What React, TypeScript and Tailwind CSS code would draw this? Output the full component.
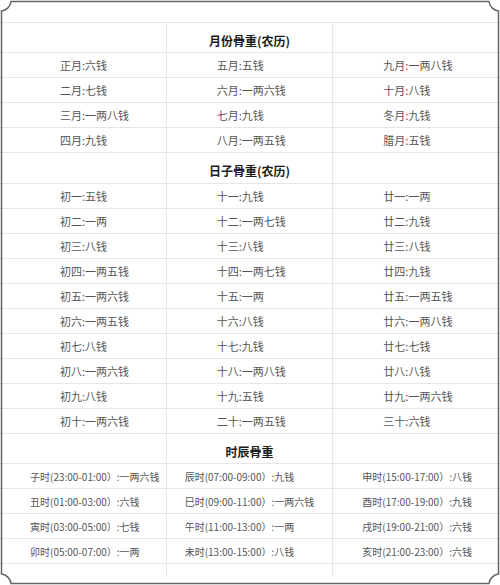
const monthRows = [
  ["正月:六钱", "五月:五钱", "九月:一两八钱"],
  ["二月:七钱", "六月:一两六钱", "十月:八钱"],
  ["三月:一两八钱", "七月:九钱", "冬月:九钱"],
  ["四月:九钱", "八月:一两五钱", "腊月:五钱"],
]

const dayRows = [
  ["初一:五钱", "十一:九钱", "廿一:一两"],
  ["初二:一两", "十二:一两七钱", "廿二:九钱"],
  ["初三:八钱", "十三:八钱", "廿三:八钱"],
  ["初四:一两五钱", "十四:一两七钱", "廿四:九钱"],
  ["初五:一两六钱", "十五:一两", "廿五:一两五钱"],
  ["初六:一两五钱", "十六:八钱", "廿六:一两八钱"],
  ["初七:八钱", "十七:九钱", "廿七:七钱"],
  ["初八:一两六钱", "十八:一两八钱", "廿八:八钱"],
  ["初九:八钱", "十九:五钱", "廿九:一两六钱"],
  ["初十:一两六钱", "二十:一两五钱", "三十:六钱"],
]

const hourRows = [
  ["子时(23:00-01:00）:一两六钱", "辰时(07:00-09:00）:九钱", "申时(15:00-17:00）:八钱"],
  ["丑时(01:00-03:00）:六钱", "巳时(09:00-11:00）:一两六钱", "酉时(17:00-19:00）:九钱"],
  ["寅时(03:00-05:00）:七钱", "午时(11:00-13:00）:一两", "戌时(19:00-21:00）:六钱"],
  ["卯时(05:00-07:00）:一两", "未时(13:00-15:00）:八钱", "亥时(21:00-23:00）:六钱"],
]

const cellPad = ["pl-[60px]", "pl-[50px]", "pl-[50px]"]
const hourPad = ["pl-[30px]", "pl-[18px]", "pl-[29px]"]

const Header = ({ title, h }: { title: string; h: string }) => (
  <div className={`grid grid-cols-3 border-b border-[#e6e6e6] ${h}`}>
    <div className="border-r border-[#e6e6e6]" />
    <div className="flex items-center justify-center pt-[6px] border-r border-[#e6e6e6] text-[12px] font-bold text-[#1c1c1c]">
      {title}
    </div>
    <div />
  </div>
)

const Rows = ({ rows, pads, size }: { rows: string[][]; pads: string[]; size: string }) => (
  <>
    {rows.map((row, i) => (
      <div key={i} className="grid grid-cols-3 h-[25px] border-b border-[#e6e6e6]">
        {row.map((text, j) => (
          <div
            key={j}
            className={`flex items-center whitespace-nowrap text-[#555] ${size} ${pads[j]} ${j < 2 ? "border-r border-[#e6e6e6]" : ""}`}
          >
            {text}
          </div>
        ))}
      </div>
    ))}
  </>
)

export default function App() {
  return (
    <div className="relative w-[500px] h-[585px] bg-white pt-[22px] font-['Noto_Sans_CJK_SC',sans-serif]">
      <div className="border-t border-[#e6e6e6]">
        <Header title="月份骨重(农历)" h="h-[30px]" />
        <Rows rows={monthRows} pads={cellPad} size="text-[11px]" />
        <Header title="日子骨重(农历)" h="h-[31px]" />
        <Rows rows={dayRows} pads={cellPad} size="text-[11px]" />
        <Header title="时辰骨重" h="h-[30px]" />
        <Rows rows={hourRows} pads={hourPad} size="text-[10px]" />
        <div className="grid grid-cols-3 h-[12px]">
          <div className="border-r border-[#e6e6e6]" />
          <div className="border-r border-[#e6e6e6]" />
          <div />
        </div>
      </div>

      {/* frame with notched corners */}
      <svg className="absolute inset-0 pointer-events-none" width="500" height="585" viewBox="0 0 500 585">
        <path
          d="M 11 1.5 H 489 A 11 11 0 0 0 498.5 11 V 574 A 11 11 0 0 0 489 583.5 H 11 A 11 11 0 0 0 1.5 574 V 11 A 11 11 0 0 0 11 1.5 Z"
          fill="none"
          stroke="#666"
          strokeWidth="1.5"
        />
      </svg>
    </div>
  )
}
